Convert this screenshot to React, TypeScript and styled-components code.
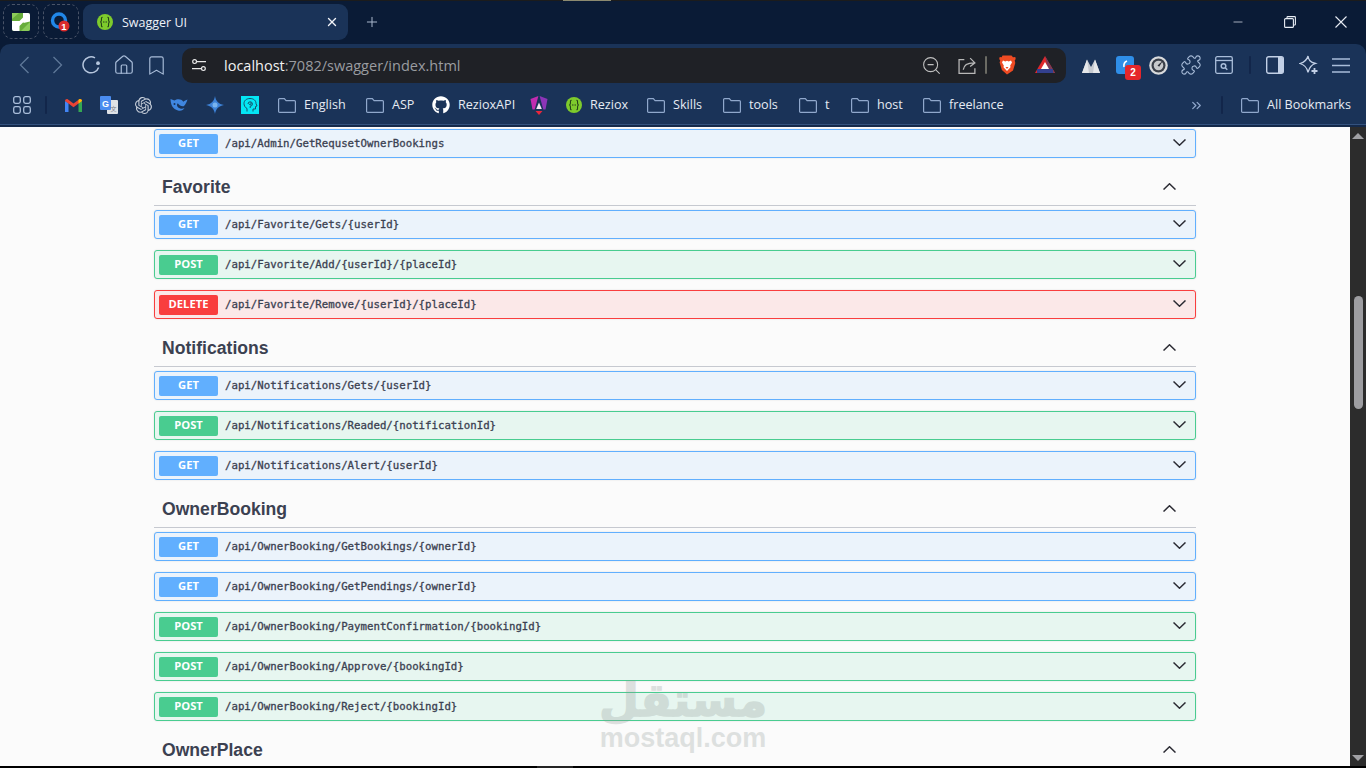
import React from "react";
import styled, { createGlobalStyle } from "styled-components";
import { Home, Bookmark as BookmarkIcon, ZoomOut, Puzzle, X, Plus, Minus, ChevronsRight } from "lucide-react";
import { FaGithub } from "react-icons/fa";
import { SiOpenai } from "react-icons/si";

const Global = createGlobalStyle`
  html, body { margin: 0; padding: 0; height: 100%; overflow: hidden; background: #000; }
  * { box-sizing: border-box; }
  #root { height: 100%; }
`;

const Screen = styled.div`
  width: 1366px; height: 768px; display: flex; flex-direction: column; position: relative; overflow: hidden;
  font-family: "Open Sans", "Noto Sans", sans-serif;
`;
const TopEdge = styled.div`
  height: 1px; background: #1c1c1c; flex: none;
`;
const TopEdgeGlow = styled.div`
  width: 48px; height: 1px; margin-left: 563px; background: #8c8a70;
`;
const TabStrip = styled.div`
  height: 43px; flex: none; background: #0a1b36; display: flex; align-items: flex-start; padding: 3px 0 0 3px;
`;
const PinnedTab = styled.div`
  width: 36px; height: 35px; margin-right: 4px; border: 1px dashed #4a5468; border-radius: 9px;
  display: flex; align-items: center; justify-content: center; flex: none;
`;
const ActiveTab = styled.div`
  width: 265px; height: 36px; background: #1a3358; border-radius: 9px; display: flex; align-items: center;
  padding: 0 9px 0 14px; color: #eef2f8; font-size: 12.5px; flex: none;
`;
const TabTitle = styled.span`
  margin-left: 9px; flex: 1; white-space: nowrap;
`;
const NewTab = styled.div`
  width: 48px; height: 36px; display: flex; align-items: center; justify-content: center; color: #a9b8cc; flex: none;
`;
const WindowControls = styled.div`
  margin-left: auto; display: flex; height: 36px; align-items: center; color: #e8edf5;
`;
const WinBtn = styled.div<{ $w: number }>`
  width: ${(p) => p.$w}px; display: flex; justify-content: center; align-items: center;
`;
const ToolbarWrap = styled.div`
  background: #0a1b36; flex: none;
`;
const Toolbar = styled.div`
  height: 41px; background: #1a3358; border-radius: 10px 10px 0 0; display: flex; align-items: center; padding: 1px 0 0 8px;
`;
const NavBtn = styled.div<{ $dim?: boolean }>`
  width: 33px; height: 33px; display: flex; align-items: center; justify-content: center; flex: none;
  color: ${(p) => (p.$dim ? "#5f7899" : "#a9bdd9")};
`;
const AddressBar = styled.div`
  width: 884px; height: 35px; margin-left: 9px; background: #1f2126; border-radius: 10px; display: flex; align-items: center;
  padding: 0 3px 0 8px; flex: none;
`;
const AddressIcon = styled.div`
  width: 18px; display: flex; align-items: center; justify-content: center; flex: none;
`;
const Url = styled.div`
  margin-left: 16px; flex: 1; font-size: 14.5px; color: #9a9ca0; white-space: nowrap;
`;
const UrlHost = styled.span`
  color: #f2f2f2;
`;
const Slot = styled.div<{ $w: number }>`
  width: ${(p) => p.$w}px; height: 30px; display: flex; align-items: center; justify-content: center; flex: none; position: relative;
`;
const Separator = styled.div<{ $c: string; $h: number }>`
  width: 2px; height: ${(p) => p.$h}px; background: ${(p) => p.$c}; flex: none; border-radius: 1px;
`;
const ExtensionRow = styled.div`
  display: flex; align-items: center; margin-left: 8px; color: #a9bdd9;
`;
const CountBadge = styled.span`
  position: absolute; left: 17px; top: 15px; width: 16px; height: 15px; background: #e5262b; border-radius: 3px;
  color: #fff; font: bold 10px "Liberation Sans", sans-serif; display: flex; align-items: center; justify-content: center;
`;
const BookmarkBar = styled.div`
  height: 42px; flex: none; background: #1a3358; display: flex; align-items: flex-start; padding: 0 0 0 13px;
  border-bottom: 2px solid #14294a; box-shadow: inset 0 -1px 0 #34527e;
`;
const Bookmark = styled.div<{ $w: number }>`
  width: ${(p) => p.$w}px; height: 40px; display: flex; align-items: center; flex: none; color: #e6ebf3; font-size: 12.6px; gap: 8px; white-space: nowrap;
`;
const BookmarkLabel = styled.span`
  padding-bottom: 2px;
`;
const Body = styled.div`
  flex: 1; display: flex; min-height: 0;
`;
const Page = styled.main`
  flex: 1; background: #fbfbfb; overflow: hidden; padding-top: 2px;
`;
const Wrapper = styled.div`
  width: 1042px; margin: 0 auto;
`;
const SectionHeader = styled.div`
  height: 37px; border-bottom: 1px solid #c6c9d0; margin-bottom: 4px; display: flex; align-items: center; justify-content: space-between;
  padding: 0 20px 2px 8px;
`;
const SectionTitle = styled.h3`
  margin: 2px 0 0; font: bold 17.6px "Liberation Sans", Arial, sans-serif; color: #3b4151;
`;
const OpRow = styled.div<{ $bg: string; $line: string }>`
  height: 29px; margin-bottom: 11px; background: ${(p) => p.$bg}; border: 1px solid ${(p) => p.$line}; border-radius: 3px;
  display: flex; align-items: center; padding: 0 9px 0 4px; box-shadow: 0 0 2px rgba(0, 0, 0, 0.12);
`;
const Method = styled.span<{ $c: string }>`
  width: 59px; height: 20px; background: ${(p) => p.$c}; border-radius: 2px; color: #fff; flex: none; padding-bottom: 2px;
  font: bold 11.2px "Open Sans", sans-serif; display: flex; align-items: center; justify-content: center;
`;
const OpPath = styled.span`
  margin-left: 7px; flex: 1; color: #3b4151; font: 400 10.72px "DejaVu Sans Mono", monospace; white-space: nowrap;
  -webkit-text-stroke: 0.3px #3b4151;
`;
const Scrollbar = styled.div`
  width: 16px; flex: none; background: #2c2c2c; display: flex; flex-direction: column; align-items: center; padding: 6px 0 5px;
`;
const ArrowUp = styled.div`
  width: 0; height: 0; border-left: 6px solid transparent; border-right: 6px solid transparent; border-bottom: 6px solid #a0a0a4; flex: none;
`;
const ArrowDown = styled.div`
  width: 0; height: 0; border-left: 6px solid transparent; border-right: 6px solid transparent; border-top: 6px solid #a0a0a4; flex: none; margin-top: auto;
`;
const Thumb = styled.div`
  width: 9px; height: 113px; margin-top: 157px; background: #9d9da1; border-radius: 5px; flex: none;
`;
const BottomEdge = styled.div`
  height: 2px; flex: none; background: #000;
`;
const BottomEdgeGlow = styled.div`
  width: 36px; height: 2px; margin-left: 537px; background: #242424;
`;
const Watermark = styled.div`
  position: absolute; left: 601px; top: 680px; width: 164px; display: flex; flex-direction: column; align-items: center; pointer-events: none;
  color: #8c9692; opacity: 0.26;
`;
const WatermarkArabic = styled.div`
  font: bold 46px/40px "DejaVu Sans", sans-serif; height: 45px; white-space: nowrap;
  -webkit-text-stroke: 1.5px #8c9692;
`;
const WatermarkLatin = styled.div`
  font: bold 27px/27px "Liberation Sans", sans-serif; white-space: nowrap;
`;
const ChevronSvg = styled.svg<{ $up?: boolean }>`
  flex: none; margin-bottom: ${(p) => (p.$up ? 0 : 2)}px;
`;

const Chevron = ({ up }: { up?: boolean }) => (
  <ChevronSvg $up={up} width="13" height="7" viewBox="0 0 13 7" fill="none" stroke="#2b2b33" strokeWidth="1.5">
    <path d={up ? "M.5 6.5 6.5.8l6 5.7" : "M.5.5l6 5.7 6-5.7"} />
  </ChevronSvg>
);

const NavChevron = ({ right }: { right?: boolean }) => (
  <svg width="11" height="18" viewBox="0 0 11 18" fill="none" stroke="#5f7899" strokeWidth="1.3">
    <path d={right ? "M1.500 1 9.500 9l-8 8" : "M9.500 1l-8 8 8 8"} />
  </svg>
);

const SwaggerIcon = () => (
  <svg width="16" height="16" viewBox="0 0 16 16" style={{ flex: "none" }}>
    <circle cx="8" cy="8" r="8" fill="#7ecb2c" />
    <path d="M5.6 3.2C4 3.2 4.6 5 4.4 6.4 4.3 7.4 3.6 8 3.2 8c.4 0 1.100.6 1.200 1.600.2 1.400-.4 3.200 1.200 3.200M10.400 3.200c1.600 0 1 1.800 1.200 3.200.1 1 .8 1.600 1.200 1.600-.4 0-1.100.6-1.200 1.600-.2 1.400.4 3.200-1.200 3.200" fill="none" stroke="#24421a" strokeWidth="1.100" />
    <path d="M6 8h4" stroke="#24421a" strokeWidth="1.200" strokeDasharray="1 .5" />
  </svg>
);

const Folder = () => (
  <svg width="18" height="15" viewBox="0 0 18 15" fill="none" stroke="#90a8cc" strokeWidth="1.200" style={{ flex: "none" }}>
    <path d="M.6 1.600a1 1 0 0 1 1-1h4.700l1.800 2h8.300a1 1 0 0 1 1 1v9.800a1 1 0 0 1-1 1H1.600a1 1 0 0 1-1-1z" />
  </svg>
);

const PinnedOne = () => (
  <svg width="18" height="18" viewBox="0 0 18 18">
    <rect width="18" height="18" rx="2" fill="#67ad3a" />
    <path d="M0 8h7.500L11 4.500V0h5a2 2 0 0 1 2 2v6.500L11.500 10v-1L7.500 13v5H2a2 2 0 0 1-2-2z" fill="#fff" />
    <path d="M9 18l9-9v7a2 2 0 0 1-2 2z" fill="#8ccc5a" />
    <path d="M0 0h7L0 6z" fill="#8ccc5a" />
  </svg>
);

const PinnedTwo = () => (
  <svg width="24" height="22" viewBox="0 0 24 22">
    <circle cx="10" cy="9.500" r="6.500" fill="none" stroke="#2187e8" strokeWidth="3.400" />
    <circle cx="15" cy="15" r="5.500" fill="#d92b2b" />
    <text x="15" y="18.600" textAnchor="middle" fontFamily="Liberation Sans" fontWeight="bold" fontSize="9.500" fill="#fff">1</text>
  </svg>
);

const Reload = () => (
  <svg width="18" height="18" viewBox="0 0 18 18" fill="none" stroke="#b6c6dd" strokeWidth="1.500">
    <path d="M13 1.900A8 8 0 1 0 16.600 11.400" />
    <circle cx="16" cy="7.200" r="1.900" fill="#b6c6dd" stroke="none" />
  </svg>
);

const Tune = () => (
  <svg width="14" height="13" viewBox="0 0 14 13" fill="none" stroke="#e8e8e8" strokeWidth="1.200">
    <circle cx="2.600" cy="2.600" r="1.900" />
    <path d="M4.600 2.600H14M0 9.600h9.400" />
    <circle cx="11.400" cy="9.600" r="1.900" />
  </svg>
);

const Share = () => (
  <svg width="19" height="19" viewBox="0 0 18 18" fill="none" stroke="#b8b8b8" strokeWidth="1.200">
    <path d="M6 3.500H1v13h15v-5" />
    <path d="M5 13c.5-4 3-6.500 10-6.500M11.500 2 16 6.500 11.500 10" />
  </svg>
);

const Brave = () => (
  <svg width="18" height="20" viewBox="0 0 18 20">
    <path d="M4.500.5h9l1.500 1.700 2.300-.3.4 2-1 1.700.6 2.400-2.300 7.500L9 19.500 3.900 15 1.600 7.500l.6-1.900-1-1.700.5-2 2 .3z" fill="#ee4b23" />
    <path d="M5 5.500l2.300 1.100L9 5.800l1.700.8L13 5.500l1 2-1.800 3 .3 1.700L9 16l-3.500-3.800.3-1.700L4 7.500z" fill="#fff" />
    <path d="M7.500 12h3L9 14z" fill="#ee4b23" />
  </svg>
);

const TriangleExt = () => (
  <svg width="20" height="18" viewBox="0 0 20 18">
    <path d="M10 0 20 17H0z" fill="#e0272c" />
    <path d="M10 0l10 17h-6z" fill="#7a3c58" />
    <path d="M10 6l4 7H6z" fill="#fff" />
    <rect x="2" y="13" width="16" height="4" fill="#33408f" />
  </svg>
);

const Mountain = () => (
  <svg width="18" height="15" viewBox="0 0 18 15">
    <path d="M0 15 5 1.500 9 9l4-7.500L18 15z" fill="#c6cad0" />
    <path d="M5 1.500 7 15H0zM13 1.500 11 15h7z" fill="#e6e8ea" />
  </svg>
);

const BlueExt = () => (
  <>
    <svg width="18" height="18" viewBox="0 0 18 18">
      <rect width="18" height="18" rx="3" fill="#2f8ee8" />
      <path d="M11 5c-2.500 1-3.500 3-3 6" fill="none" stroke="#fff" strokeWidth="1.600" />
    </svg>
    <CountBadge>2</CountBadge>
  </>
);

const Gauge = () => (
  <svg width="19" height="19" viewBox="0 0 19 19">
    <circle cx="9.500" cy="9.500" r="9.300" fill="#d8dadc" />
    <circle cx="9.500" cy="9.500" r="7" fill="#3a3f48" />
    <circle cx="9.500" cy="9.500" r="4.800" fill="#c8cacc" />
    <path d="M8.500 9.500 14 4.500l-3.800 6.200z" fill="#2b2f38" />
  </svg>
);

const SearchWindow = () => (
  <svg width="18" height="18" viewBox="0 0 18 18" fill="none" stroke="#a9bdd9" strokeWidth="1.300">
    <rect x=".7" y=".7" width="16.600" height="16.600" rx="1.500" />
    <path d="M.7 4.500h16.600" />
    <circle cx="8.500" cy="10" r="2.300" strokeWidth="1.500" />
    <path d="M10.300 11.800 12.300 13.800" strokeWidth="1.500" />
  </svg>
);

const SidePanel = () => (
  <svg width="18" height="18" viewBox="0 0 18 18">
    <rect x=".7" y=".7" width="16.600" height="16.600" rx="2" fill="none" stroke="#c2d0e6" strokeWidth="1.400" />
    <path d="M12 1h3.500A1.500 1.500 0 0 1 17 2.500v13a1.500 1.500 0 0 1-1.500 1.500H12z" fill="#c2d0e6" />
  </svg>
);

const Sparkle = () => (
  <svg width="20" height="20" viewBox="0 0 20 20" fill="none" stroke="#c2d0e6" strokeWidth="1.300">
    <path d="M9 1c.7 4 2 6 7.500 7.500-2.500.8-3.500 1.500-4.500 2.800-1 1-2 3-3 6-.7-4-3-7.200-8-8.800C6 7 8 5 9 1z" />
    <path d="M15.500 13v6M12.500 16h6" strokeWidth="1.800" />
  </svg>
);

const MenuLines = () => (
  <svg width="18" height="15" viewBox="0 0 18 15" stroke="#a9bdd9" strokeWidth="1.400">
    <path d="M0 1h18M0 7.500h18M0 14h18" />
  </svg>
);

const Apps = () => (
  <svg width="18" height="18" viewBox="0 0 18 18" fill="none" stroke="#a9bdd9" strokeWidth="1.300">
    <rect x=".7" y=".7" width="6.600" height="6.600" rx="1.800" />
    <rect x="10.700" y=".7" width="6.600" height="6.600" rx="1.800" />
    <rect x=".7" y="10.700" width="6.600" height="6.600" rx="1.800" />
    <rect x="10.700" y="10.700" width="6.600" height="6.600" rx="1.800" />
  </svg>
);

const Gmail = () => (
  <svg width="17" height="13" viewBox="0 0 17 13">
    <path d="M0 2v11h3.500V4z" fill="#4285f4" />
    <path d="M13.500 4v9H17V2z" fill="#34a853" />
    <path d="M0 2C0 .3 1.800-.5 3 .4l5.500 4.100L14 .4c1.200-.9 3-.1 3 1.600l-3.500 2.500-5 3.700-5-3.700z" fill="#ea4335" />
    <path d="M13.500 4.500 17 2c0-1.700-1.800-2.500-3-1.600l-.5.400z" fill="#fbbc04" />
  </svg>
);

const Translate = () => (
  <svg width="18" height="18" viewBox="0 0 18 18">
    <rect x="7" y="4" width="11" height="14" rx="1" fill="#dfe2e6" />
    <rect width="11" height="14" rx="1" fill="#4a8cf0" />
    <text x="5.500" y="10.500" textAnchor="middle" fontFamily="Liberation Sans" fontWeight="bold" fontSize="9" fill="#fff">G</text>
    <text x="13.500" y="15" textAnchor="middle" fontFamily="Noto Sans CJK SC" fontSize="6" fill="#7b8088">文</text>
  </svg>
);

const Whale = () => (
  <svg width="18" height="14" viewBox="0 0 18 14">
    <path d="M17.500 1.500c-1.500 1-3 .9-4.200 2.300C11 .5 7 1 4.500 2.500 3 2 2 1.600.5 1c.2 6 2.400 10 7.500 11.500 3 .7 5.500-.5 6.500-2.500-2 1-4.500 1-6.500-.8C6.800 8 6.500 6.200 7.800 5.200c1.400 2.300 3.600 3.300 5.900 3 1.700-1.300 3-4 3.800-6.700z" fill="#3f86e0" />
    <circle cx="4.500" cy="6" r="1" fill="#1a3358" />
  </svg>
);

const Star = () => (
  <svg width="18" height="18" viewBox="0 0 18 18">
    <path d="M9 0c.8 5 3.500 8 9 9-5.500 1-8.200 4-9 9-.8-5-3.500-8-9-9 5.500-1 8.200-4 9-9z" fill="#3d83d8" />
    <circle cx="9" cy="9" r="2.500" fill="#79b4ee" />
  </svg>
);

const CyanHead = () => (
  <svg width="18" height="18" viewBox="0 0 18 18" fill="none" stroke="#17506a" strokeWidth="1">
    <rect width="18" height="18" fill="#04e6f4" stroke="none" />
    <path d="M6 15.500v-3c-2-1-3-3-3-5C3 4.500 5.500 2.500 9 2.500s6 2 6 5l1 2.500-1.500.5V13h-2.500v2.500" />
    <path d="M7 8a2.200 2.200 0 1 1 2.200 2.200V12M9.200 6.800a1 1 0 1 1-1 1" />
  </svg>
);

const Angular = () => (
  <svg width="18" height="19" viewBox="0 0 18 19">
    <path d="M8.400 0 .5 3 2.500 13.500h2.200z" fill="#c22bb0" />
    <path d="M9.600 0l7.900 3-2 10.500h-2.200z" fill="#8c35b8" />
    <path d="M5.500 15h7L9 19z" fill="#e8263c" />
    <path d="M9 6.500l2.800 6.500H6.200z" fill="#f4e6f2" />
  </svg>
);

type Op = { m: "GET" | "POST" | "DELETE"; p: string };
const palette = {
  GET: { bg: "#ebf3fb", line: "#61affe", c: "#61affe" },
  POST: { bg: "#e7f6f0", line: "#49cc90", c: "#49cc90" },
  DELETE: { bg: "#fbe8e8", line: "#f93e3e", c: "#f93e3e" },
};

const Operation = ({ m, p }: Op) => (
  <OpRow $bg={palette[m].bg} $line={palette[m].line}>
    <Method $c={palette[m].c}>{m}</Method>
    <OpPath>{p}</OpPath>
    <Chevron />
  </OpRow>
);

const sections: { title: string; ops: Op[] }[] = [
  {
    title: "Favorite",
    ops: [
      { m: "GET", p: "/api/Favorite/Gets/{userId}" },
      { m: "POST", p: "/api/Favorite/Add/{userId}/{placeId}" },
      { m: "DELETE", p: "/api/Favorite/Remove/{userId}/{placeId}" },
    ],
  },
  {
    title: "Notifications",
    ops: [
      { m: "GET", p: "/api/Notifications/Gets/{userId}" },
      { m: "POST", p: "/api/Notifications/Readed/{notificationId}" },
      { m: "GET", p: "/api/Notifications/Alert/{userId}" },
    ],
  },
  {
    title: "OwnerBooking",
    ops: [
      { m: "GET", p: "/api/OwnerBooking/GetBookings/{ownerId}" },
      { m: "GET", p: "/api/OwnerBooking/GetPendings/{ownerId}" },
      { m: "POST", p: "/api/OwnerBooking/PaymentConfirmation/{bookingId}" },
      { m: "POST", p: "/api/OwnerBooking/Approve/{bookingId}" },
      { m: "POST", p: "/api/OwnerBooking/Reject/{bookingId}" },
    ],
  },
  { title: "OwnerPlace", ops: [] },
];

const bookmarks: { w: number; icon: React.ReactNode; label?: string }[] = [
  { w: 32, icon: <Apps /> },
  { w: 20, icon: <Separator $c="#12264a" $h={18} /> },
  { w: 35, icon: <Gmail /> },
  { w: 35, icon: <Translate /> },
  { w: 35, icon: <SiOpenai size={17} color="#c6ced9" /> },
  { w: 36, icon: <Whale /> },
  { w: 35, icon: <Star /> },
  { w: 37, icon: <CyanHead /> },
  { w: 88, icon: <Folder />, label: "English" },
  { w: 66, icon: <Folder />, label: "ASP" },
  { w: 98, icon: <FaGithub size={18} color="#fff" style={{ flex: "none" }} />, label: "RezioxAPI" },
  { w: 36, icon: <Angular /> },
  { w: 81, icon: <SwaggerIcon />, label: "Reziox" },
  { w: 76, icon: <Folder />, label: "Skills" },
  { w: 76, icon: <Folder />, label: "tools" },
  { w: 52, icon: <Folder />, label: "t" },
  { w: 72, icon: <Folder />, label: "host" },
  { w: 266, icon: <Folder />, label: "freelance" },
  { w: 32, icon: <ChevronsRight size={15} color="#90a8cc" /> },
];

export default function App() {
  return (
    <Screen>
      <Global />
      <TopEdge>
        <TopEdgeGlow />
      </TopEdge>
      <TabStrip>
        <PinnedTab>
          <PinnedOne />
        </PinnedTab>
        <PinnedTab>
          <PinnedTwo />
        </PinnedTab>
        <ActiveTab>
          <SwaggerIcon />
          <TabTitle>Swagger UI</TabTitle>
          <X size={14} strokeWidth={2.4} color="#f2f4f8" />
        </ActiveTab>
        <NewTab>
          <Plus size={16} strokeWidth={1.5} />
        </NewTab>
        <WindowControls>
          <WinBtn $w={52}>
            <Minus size={14} strokeWidth={1.2} />
          </WinBtn>
          <WinBtn $w={52}>
            <svg width="12" height="12" viewBox="0 0 12 12" fill="none" stroke="#e8edf5" strokeWidth="1.100">
              <rect x=".6" y="2.600" width="8.800" height="8.800" rx="1" />
              <path d="M3 2.500V1.400a.8.8 0 0 1 .8-.8h6.800a.8.8 0 0 1 .8.8v6.800a.8.8 0 0 1-.8.8H9.500" />
            </svg>
          </WinBtn>
          <WinBtn $w={50}>
            <svg width="12" height="12" viewBox="0 0 12 12" stroke="#e8edf5" strokeWidth="1.100">
              <path d="M.5.5l11 11M11.500.5l-11 11" />
            </svg>
          </WinBtn>
        </WindowControls>
      </TabStrip>
      <ToolbarWrap>
        <Toolbar>
          <NavBtn $dim>
            <NavChevron />
          </NavBtn>
          <NavBtn $dim>
            <NavChevron right />
          </NavBtn>
          <NavBtn>
            <Reload />
          </NavBtn>
          <NavBtn>
            <Home size={22} strokeWidth={1.3} />
          </NavBtn>
          <NavBtn>
            <BookmarkIcon size={23} strokeWidth={1.2} />
          </NavBtn>
          <AddressBar>
            <AddressIcon>
              <Tune />
            </AddressIcon>
            <Url>
              <UrlHost>localhost</UrlHost>:7082/swagger/index.html
            </Url>
            <Slot $w={36}>
              <ZoomOut size={21} strokeWidth={1.2} color="#c0c0c0" />
            </Slot>
            <Slot $w={36}>
              <Share />
            </Slot>
            <Separator $c="#6b6b64" $h={18} />
            <Slot $w={40}>
              <Brave />
            </Slot>
            <Slot $w={36}>
              <TriangleExt />
            </Slot>
          </AddressBar>
          <ExtensionRow>
            <Slot $w={34}>
              <Mountain />
            </Slot>
            <Slot $w={34}>
              <BlueExt />
            </Slot>
            <Slot $w={33}>
              <Gauge />
            </Slot>
            <Slot $w={32}>
              <Puzzle size={22} strokeWidth={1.2} />
            </Slot>
            <Slot $w={33}>
              <SearchWindow />
            </Slot>
            <Slot $w={20}>
              <Separator $c="#12264a" $h={18} />
            </Slot>
            <Slot $w={30}>
              <SidePanel />
            </Slot>
            <Slot $w={38}>
              <Sparkle />
            </Slot>
            <Slot $w={26}>
              <MenuLines />
            </Slot>
          </ExtensionRow>
        </Toolbar>
      </ToolbarWrap>
      <BookmarkBar>
        {bookmarks.map((b, i) => (
          <Bookmark key={i} $w={b.w}>
            {b.icon}
            {b.label && <BookmarkLabel>{b.label}</BookmarkLabel>}
          </Bookmark>
        ))}
        <Bookmark $w={20}>
          <Separator $c="#12264a" $h={18} />
        </Bookmark>
        <Bookmark $w={120}>
          <Folder />
          <BookmarkLabel>All Bookmarks</BookmarkLabel>
        </Bookmark>
      </BookmarkBar>
      <Body>
        <Page>
          <Wrapper>
            <Operation m="GET" p="/api/Admin/GetRequsetOwnerBookings" />
            {sections.map((s) => (
              <section key={s.title}>
                <SectionHeader>
                  <SectionTitle>{s.title}</SectionTitle>
                  <Chevron up />
                </SectionHeader>
                {s.ops.map((o) => (
                  <Operation key={o.p} {...o} />
                ))}
              </section>
            ))}
          </Wrapper>
        </Page>
        <Scrollbar>
          <ArrowUp />
          <Thumb />
          <ArrowDown />
        </Scrollbar>
      </Body>
      <BottomEdge>
        <BottomEdgeGlow />
      </BottomEdge>
      <Watermark>
        <WatermarkArabic>مستقل</WatermarkArabic>
        <WatermarkLatin>mostaql.com</WatermarkLatin>
      </Watermark>
    </Screen>
  );
}
